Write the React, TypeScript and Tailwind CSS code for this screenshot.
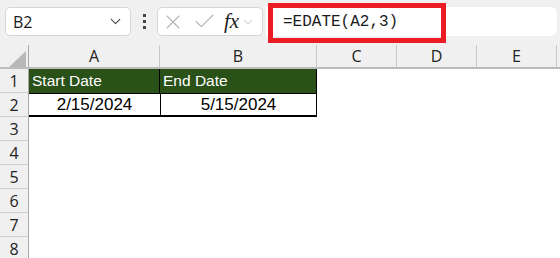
import { Check, ChevronDown, X } from 'lucide-react'

const cols = [
  { name: 'A', w: 'w-[131px]' },
  { name: 'B', w: 'w-[157px]' },
  { name: 'C', w: 'w-[80px]' },
  { name: 'D', w: 'w-[80px]' },
  { name: 'E', w: 'w-[80px]' },
]

const ui = { fontFamily: '"Open Sans", "Noto Sans", sans-serif' }
const cell = { fontFamily: '"Liberation Sans", Arial, sans-serif' }

function Toolbar() {
  return (
    <div className="relative h-[45px] bg-[#f0f0f0] flex items-start pt-[7px] pl-[5px]">
      <div className="w-[126px] h-[29px] bg-white border border-[#d6d6d6] rounded-[5px] flex items-center justify-between pl-[7px] pr-[6px]">
        <span className="text-[16px] text-[#1a1a1a]" style={ui}>B2</span>
        <ChevronDown size={17} strokeWidth={1.6} className="text-[#444]" />
      </div>
      <div className="w-[26px] h-[29px] flex flex-col items-center justify-center gap-[3px]">
        <span className="w-[3px] h-[3px] bg-[#444]" />
        <span className="w-[3px] h-[3px] bg-[#444]" />
        <span className="w-[3px] h-[3px] bg-[#444]" />
      </div>
      <div className="w-[106px] h-[29px] bg-white border border-[#d6d6d6] rounded-[5px] flex items-center pl-[3px]">
        <X size={24} strokeWidth={1.1} className="text-[#b4b4b4]" />
        <Check size={25} strokeWidth={1.1} className="text-[#b4b4b4] ml-[7px]" />
        <span className="ml-[7px] text-[21px] italic text-[#222] leading-none" style={{ fontFamily: '"Liberation Serif", "Times New Roman", serif' }}>fx</span>
        <ChevronDown size={14} strokeWidth={1.4} className="text-[#aaa] ml-[2px]" />
      </div>
      <div className="ml-[3px] flex-1 mr-[3px] h-[29px] bg-white rounded-r-[6px] flex items-center pl-[17px]">
        <span className="text-[16px] text-[#1a1a1a]" style={{ fontFamily: '"Liberation Mono", "Courier New", monospace' }}>=EDATE(A2,3)</span>
      </div>
      <div className="absolute left-[268px] top-[3px] w-[178px] h-[40px] border-[5px] border-[#ec1c24]" />
    </div>
  )
}

function ColHeader() {
  return (
    <div className="flex h-[24px] bg-[#f0f0f0] border-b-2 border-[#bcbcbc]">
      <div className="w-[29px] relative border-r border-[#a8a8a8]">
        <svg className="absolute left-[9px] top-[6px]" width="17" height="16" viewBox="0 0 17 16">
          <polygon points="17,0 17,16 0,16" fill="#b8b8b8" />
        </svg>
      </div>
      {cols.map((c) => (
        <div key={c.name} className={`${c.w} border-r border-[#c8c8c8] flex items-center justify-center text-[16px] text-[#222]`} style={ui}>
          {c.name}
        </div>
      ))}
      <div className="flex-1" />
    </div>
  )
}

function RowHead({ n }: { n: number }) {
  return (
    <div className="w-[29px] h-full bg-[#f0f0f0] border-r border-[#a8a8a8] border-b border-b-[#cbcbcb] flex items-center justify-center text-[16px] text-[#222]" style={ui}>
      {n}
    </div>
  )
}

export default function App() {
  return (
    <div className="w-[560px] h-[258px] bg-white overflow-hidden">
      <Toolbar />
      <ColHeader />
      <div className="flex h-[24px]">
        <RowHead n={1} />
        <div className="w-[131px] bg-[#2a5118] border-r border-black flex items-center pl-[3px] text-white text-[15.5px]" style={cell}>Start Date</div>
        <div className="w-[157px] bg-[#2a5118] border-r border-black flex items-center pl-[3px] text-white text-[15.5px]" style={cell}>End Date</div>
      </div>
      <div className="flex h-[24px]">
        <RowHead n={2} />
        <div className="w-[131px] border-t border-b-2 border-black flex items-center justify-center text-[17px] text-black" style={cell}>2/15/2024</div>
        <div className="w-[157px] border-t border-b-2 border-x border-black flex items-center justify-center text-[17px] text-black" style={cell}>5/15/2024</div>
      </div>
      {[3, 4, 5, 6, 7, 8].map((n) => (
        <div key={n} className="flex h-[24px]">
          <RowHead n={n} />
        </div>
      ))}
    </div>
  )
}
